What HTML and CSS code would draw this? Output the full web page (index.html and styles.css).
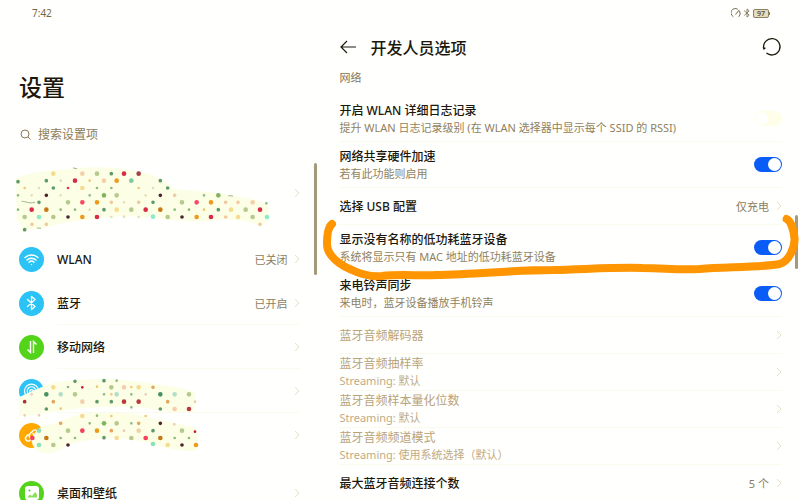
FILE: index.html
```
<!DOCTYPE html>
<html lang="zh-CN">
  <head>
    <meta charset="UTF-8" />
    <meta name="viewport" content="width=device-width, initial-scale=1.0" />
    <title>设置</title>
    <link rel="stylesheet" href="styles.css">
  </head>
  <body>
    <svg width="0" height="0" class="sprite">
      <symbol id="chevron" viewBox="0 0 6 10">
        <path d="M1 1l4 4-4 4" fill="none" stroke="currentColor" />
      </symbol>
      <symbol id="bluetooth" viewBox="0 0 12 16">
        <path d="M2 4.5l7.5 7L6 14.5V1.5l3.5 3L2 11.5" fill="none" stroke="currentColor" stroke-width="1.3" stroke-linejoin="round" stroke-linecap="round" />
      </symbol>
    </svg>

    <header class="status">
      <time>7:42</time>
      <div class="status-icons">
        <svg width="10" height="10" viewBox="0 0 10 10" fill="none" stroke="currentColor" stroke-linecap="round">
          <path d="M2 8.5A4.2 4.2 0 0 1 6.5 1.1M8.7 3.3A4.2 4.2 0 0 1 8 8.5M4.8 6.2L8 2.2" />
        </svg>
        <svg width="8" height="10"><use href="#bluetooth" /></svg>
        <span class="battery">97</span>
      </div>
    </header>

    <div class="panels">
      <aside class="sidebar">
        <h1>设置</h1>
        <label class="search">
          <svg width="11" height="11" viewBox="0 0 11 11" fill="none" stroke="currentColor">
            <circle cx="5" cy="5" r="4" />
            <path d="M8 8l2.5 2.5" />
          </svg>
          <input type="search" placeholder="搜索设置项" aria-label="搜索设置项" />
        </label>

        <nav>
          <a href="#account" class="item account" aria-label="账号">
            <svg class="chevron"><use href="#chevron" /></svg>
            <svg class="scribble scribble-account" viewBox="42 45 780 210" stroke-linecap="round">
              <path fill="#fcffe6" d="M48 88C100 64 170 66 225 58C300 50 380 60 430 70C470 80 500 96 520 120C580 126 640 128 700 140C750 148 795 158 806 170L806 208C795 222 790 232 776 228C740 212 690 206 640 214C600 224 570 214 500 212C420 198 330 200 280 210C220 214 180 222 130 238C110 242 90 238 70 248C62 240 66 224 50 214Z" />
              <g class="dots-s">
                <path stroke="#f2c877" d="M74 117h0M416 117h0M612 182h0M269 95h0" />
                <path stroke="#e5dfb8" d="M95 139h0M182 95h0M182 139h0M117 117h0M459 117h0M269 182h0M372 160h0M437 139h0M334 204h0M372 203h0M416 204h0" />
                <path stroke="#8fba7e" d="M182 182h0M225 182h0M269 139h0M291 117h0M334 117h0M524 182h0M567 182h0M612 139h0M54 139h0M54 182h0M799 163h0" />
                <path stroke="#e33150" d="M204 117h0" />
              </g>
              <g class="dots-m">
                <path stroke="#4b2430" d="M139 139h0M204 204h0M481 139h0M546 204h0" />
                <path stroke="#5e9b68" d="M54 98h0M139 95h0M160 117h0M334 74h0M481 95h0M503 117h0M312 182h0M655 182h0M74 242h0M117 160h0M459 160h0" />
                <path stroke="#f0c9a0" d="M524 139h0M334 160h0M677 160h0M714 160h0M677 204h0M416 160h0M139 226h0M96 226h0M780 226h0" />
              </g>
              <g class="dots-l">
                <path stroke="#b6c98e" d="M74 204h0M160 204h0M204 160h0M350 139h0M394 182h0M503 204h0M546 160h0M737 182h0M758 204h0M291 74h0" />
                <path stroke="#f5cfac" d="M247 74h0M312 95h0M758 160h0" />
                <path stroke="#f6dc91" d="M160 74h0M247 117h0M350 182h0M693 182h0M714 204h0" />
                <path stroke="#d92b46" d="M225 95h0M372 74h0M95 182h0M437 182h0M780 182h0M291 204h0M633 204h0" />
                <path stroke="#f54b65" d="M247 160h0M590 160h0" />
                <path stroke="#a2424b" d="M416 74h0" />
                <path stroke="#ee9a1d" d="M350 95h0M291 160h0M247 204h0M590 204h0M633 160h0" />
                <path stroke="#c77916" d="M139 182h0M481 182h0" />
                <path stroke="#82b45e" d="M312 139h0M655 139h0" />
                <path stroke="#7fc9a0" d="M394 95h0" />
                <path stroke="#8cebc8" d="M117 204h0M459 203h0M801 204h0" />
              </g>
              <path d="M66 157c14 0 18 8 38 3M220 57l10 2M686 140l12 1M112 237l10 1" fill="none" stroke="#9fb58a" stroke-width="3" />
            </svg>
          </a>

          <a href="#wlan" class="item">
            <span class="badge blue">
              <svg width="17" height="17" viewBox="0 0 17 17" fill="none" stroke="#fff" stroke-width="1.4" stroke-linecap="round">
                <path d="M2 6.5a9.5 9.5 0 0 1 13 0M4 9a6.5 6.5 0 0 1 9 0M6 11.3a3.6 3.6 0 0 1 5 0M8.5 13.5h0" />
              </svg>
            </span>
            <span class="name">WLAN</span>
            <span class="value">已关闭</span>
            <svg class="chevron"><use href="#chevron" /></svg>
          </a>
          <a href="#bluetooth-settings" class="item line">
            <span class="badge blue"><svg width="13" height="16"><use href="#bluetooth" /></svg></span>
            <span class="name">蓝牙</span>
            <span class="value">已开启</span>
            <svg class="chevron"><use href="#chevron" /></svg>
          </a>
          <a href="#mobile" class="item line">
            <span class="badge green">
              <svg width="14" height="14" viewBox="0 0 14 14" fill="none" stroke="#fff" stroke-width="1.4">
                <path d="M5.5 1v11.5L2.5 9.5M8.5 13V1.5l3 3" />
              </svg>
            </span>
            <span class="name">移动网络</span>
            <svg class="chevron"><use href="#chevron" /></svg>
          </a>
          <a href="#device" class="item line covered" aria-label="超级终端">
            <span class="badge blue">
              <svg width="17" height="17" viewBox="0 0 17 17" fill="none" stroke="#fff" stroke-width="1.2" stroke-linecap="round">
                <path d="M3.5 13a7 7 0 1 1 10 0M5.3 11a4.3 4.3 0 1 1 6.4 0" />
                <circle cx="8.5" cy="8.5" r="1.8" />
              </svg>
            </span>
            <svg class="chevron"><use href="#chevron" /></svg>
            <svg class="scribble scribble-device" viewBox="45 45 561 249" stroke-linecap="round">
              <path fill="#fcffe6" d="M58 114C85 102 120 84 160 72C230 58 330 58 400 66C470 76 550 84 584 100Q592 116 580 160C540 162 490 158 440 148C390 138 310 144 240 148C170 154 120 168 58 172Z" />
              <path fill="#fcffe6" d="M125 203C150 200 180 186 230 168C300 152 400 160 450 176C500 190 560 194 586 208Q600 240 588 276C540 278 490 264 430 248C350 230 270 236 200 260C180 276 150 286 130 282C108 276 98 262 95 248C95 232 105 216 125 203Z" />
              <g class="dots-s">
                <path stroke="#f2c877" d="M291 83h0M394 84h0M437 171h0M334 171h0M182 149h0M334 106h0" />
                <path stroke="#8fba7e" d="M204 84h0M312 106h0M394 106h0M394 193h0M350 65h0M269 193h0M182 237h0M225 237h0M524 237h0M567 237h0M291 170h0M394 145h0" />
                <path stroke="#e9cdb7" d="M74 169h0M117 169h0M372 215h0M585 128h0M523 196h0M437 106h0M95 106h0" />
                <path stroke="#c41a2e" d="M247 85h0M585 218h0" />
              </g>
              <g class="dots-m">
                <path stroke="#4b2430" d="M481 193h0M204 258h0M546 258h0" />
                <path stroke="#5e9b68" d="M139 150h0M291 128h0M334 128h0M481 150h0M312 65h0M225 67h0M312 236h0M459 215h0" />
                <path stroke="#e4a65e" d="M459 85h0M160 128h0M182 193h0M334 215h0M416 193h0M503 128h0" />
                <path stroke="#a8303b" d="M74 128h0" />
              </g>
              <g class="dots-l">
                <path stroke="#b6c98e" d="M334 85h0M225 106h0M204 215h0M350 193h0M394 237h0M546 215h0M567 106h0M160 258h0" />
                <path stroke="#f5cfac" d="M247 128h0M416 215h0M524 150h0M372 85h0" />
                <path stroke="#f6dc91" d="M247 171h0M160 85h0M416 85h0M350 237h0M503 258h0" />
                <path stroke="#b5dec9" d="M182 106h0M524 106h0M350 106h0" />
                <path stroke="#479263" d="M139 106h0M481 106h0" />
                <path stroke="#b83b40" d="M372 128h0M416 128h0M567 150h0" />
                <path stroke="#f5405e" d="M247 215h0M437 237h0M97 237h0" />
                <path stroke="#ee9a1d" d="M291 215h0M588 258h0" />
                <path stroke="#c77916" d="M139 237h0M481 237h0" />
                <path stroke="#82b45e" d="M312 193h0" />
                <path stroke="#8cdfba" d="M117 215h0M117 258h0M459 255h0" />
              </g>
            </svg>
          </a>
          <a href="#more" class="item" aria-label="更多连接">
            <span class="badge amber">
              <svg width="17" height="17" viewBox="0 0 17 17" fill="none" stroke="#fff" stroke-width="1.4" stroke-linecap="round">
                <path d="M7 10.5a2.6 2.6 0 0 1 0-3.7l3-3a2.6 2.6 0 0 1 3.7 3.7L12 9.2M10 6.5a2.6 2.6 0 0 1 0 3.7l-3 3a2.6 2.6 0 0 1-3.7-3.7L5 7.8" />
              </svg>
            </span>
            <svg class="chevron"><use href="#chevron" /></svg>
          </a>
          <a href="#wallpaper" class="item group">
            <span class="badge green">
              <svg width="14" height="14" viewBox="0 0 14 14">
                <rect width="14" height="14" rx="3" fill="#fff" />
                <circle cx="4.5" cy="4.5" r="1" fill="#56cf1d" />
                <path d="M2 11.5l3-3 2 1.5 3-4 2 2.5v3z" fill="#8be05c" />
              </svg>
            </span>
            <span class="name">桌面和壁纸</span>
            <svg class="chevron"><use href="#chevron" /></svg>
          </a>
        </nav>
        <span class="thumb"></span>
      </aside>

      <main class="detail">
        <div class="title-bar">
          <button type="button" aria-label="返回">
            <svg width="17" height="16" viewBox="0 0 17 16" fill="none" stroke="currentColor" stroke-width="1.2">
              <path d="M8 2L2 8l6 6M2 8h15" />
            </svg>
          </button>
          <h2>开发人员选项</h2>
          <button type="button" aria-label="重置">
            <svg width="20" height="20" viewBox="0 0 20 20" fill="none" stroke="currentColor" stroke-width="1.3">
              <path d="M4.5 16A8.2 8.2 0 1 0 1.8 11.5" />
              <path d="M1.2 10.3l.8 1.7 1.4-1.2" />
            </svg>
          </button>
        </div>

        <h3>网络</h3>
        <label class="row tall">
          <span class="text"><b>开启 WLAN 详细日志记录</b><small>提升 WLAN 日志记录级别 (在 WLAN 选择器中显示每个 SSID 的 RSSI)</small></span>
          <input type="checkbox" class="switch" />
        </label>
        <label class="row tall">
          <span class="text"><b>网络共享硬件加速</b><small>若有此功能则启用</small></span>
          <input type="checkbox" class="switch" checked />
        </label>
        <a href="#usb" class="row">
          <span class="text"><b>选择 USB 配置</b></span>
          <span class="value">仅充电</span>
          <svg class="chevron"><use href="#chevron" /></svg>
        </a>
        <label class="row tall marked">
          <span class="text"><b>显示没有名称的低功耗蓝牙设备</b><small>系统将显示只有 MAC 地址的低功耗蓝牙设备</small></span>
          <input type="checkbox" class="switch" checked />
          <svg class="marker" viewBox="322 212 479 68" preserveAspectRatio="none">
            <path d="M332 223C328 226 327 236 327 243C327 255 340 264 352 269C362 274 370 276 382 275C400 273 420 275 437 274C480 273 515 269 553 269C590 268 620 266 643 267C665 267 675 269 700 268C730 266 765 266 780 263C790 260 795 246 795 238C794 228 791 220 787 218" />
          </svg>
        </label>
        <label class="row tall">
          <span class="text"><b>来电铃声同步</b><small>来电时，蓝牙设备播放手机铃声</small></span>
          <input type="checkbox" class="switch" checked />
        </label>
        <a href="#codec" class="row disabled">
          <span class="text"><b>蓝牙音频解码器</b></span>
          <svg class="chevron"><use href="#chevron" /></svg>
        </a>
        <a href="#sample-rate" class="row disabled">
          <span class="text"><b>蓝牙音频抽样率</b><small>Streaming: 默认</small></span>
          <svg class="chevron"><use href="#chevron" /></svg>
        </a>
        <a href="#bits" class="row disabled">
          <span class="text"><b>蓝牙音频样本量化位数</b><small>Streaming: 默认</small></span>
          <svg class="chevron"><use href="#chevron" /></svg>
        </a>
        <a href="#channel" class="row disabled">
          <span class="text"><b>蓝牙音频频道模式</b><small>Streaming: 使用系统选择（默认）</small></span>
          <svg class="chevron"><use href="#chevron" /></svg>
        </a>
        <a href="#max" class="row">
          <span class="text"><b>最大蓝牙音频连接个数</b></span>
          <span class="value">5 个</span>
          <svg class="chevron"><use href="#chevron" /></svg>
        </a>
        <span class="thumb"></span>
      </main>
    </div>
  </body>
</html>
```
FILE: styles.css
```
* {
  box-sizing: border-box;
}
body {
  display: flex;
  flex-direction: column;
  height: 100vh;
  margin: 0;
  overflow: hidden;
  background-color: #fffffd;
  color: #1c180c;
  font-family: "Noto Sans", "Noto Sans CJK SC", sans-serif;
  font-size: 12px;
}
a {
  color: inherit;
  text-decoration: none;
}
h1, h2, h3 {
  margin: 0;
  font-weight: 500;
}
button {
  display: flex;
  padding: 0;
  border: 0;
  background: none;
  color: inherit;
}
.sprite {
  position: absolute;
}

/* status bar */
.status {
  display: flex;
  flex: none;
  justify-content: space-between;
  align-items: center;
  height: 26px;
  padding: 0 32px;
  color: #75694a;
  font-size: 10px;
}
.status-icons {
  display: flex;
  align-items: center;
  gap: 2px;
}
.battery {
  position: relative;
  width: 16px;
  height: 9px;
  border: 1px solid #8d8060;
  border-radius: 2px;
  background-color: #e6dcc0;
  color: #5c5030;
  font-size: 7px;
  font-weight: 600;
  line-height: 7px;
  text-align: center;
}
.battery::after {
  content: "";
  position: absolute;
  top: 2px;
  right: -2px;
  width: 1px;
  height: 3px;
  background-color: #8d8060;
}

.panels {
  display: grid;
  flex: 1;
  grid-template-columns: 2fr 3fr;
  min-height: 0;
}
.sidebar,
.detail {
  position: relative;
  min-width: 0;
}
.thumb {
  position: absolute;
  width: 3px;
  border-radius: 2px;
  background-color: #a39a7c;
}
.chevron {
  flex: none;
  width: 6px;
  height: 10px;
  color: #e6e1c6;
}
.value {
  margin-right: 7px;
  color: #8b7d60;
  font-size: 11px;
}

/* left panel */
.sidebar {
  padding: 43px 20px 0 19px;
}
.sidebar h1 {
  margin-bottom: 14px;
  font-size: 23px;
  line-height: 36px;
}
.search {
  display: flex;
  align-items: center;
  gap: 7px;
  height: 30px;
  padding-left: 1px;
  color: #8d7c58;
}
.search input {
  flex: 1;
  min-width: 0;
  padding: 0;
  border: 0;
  outline: 0;
  background: none;
  font: inherit;
}
.search input::placeholder {
  color: #8d7c58;
}
.item {
  position: relative;
  display: flex;
  align-items: center;
  height: 44px;
}
.item .chevron {
  margin-left: auto;
}
.item .value {
  margin-left: auto;
}
.item .value + .chevron {
  margin-left: 0;
}
.account {
  height: 88px;
}
.line::after {
  content: "";
  position: absolute;
  right: 0;
  bottom: 0;
  left: 38px;
  height: 1px;
  background-color: #fafaee;
}
.group {
  margin-top: 14px;
}
.badge {
  display: flex;
  flex: none;
  justify-content: center;
  align-items: center;
  width: 25px;
  height: 25px;
  margin-right: 13px;
  border-radius: 50%;
  color: #fff;
}
.blue {
  background-color: #2bc3f5;
}
.green {
  background-color: #53d319;
}
.amber {
  background-color: #ffa800;
}
.name {
  font-weight: 500;
}
.covered {
  z-index: 1;
}
.scribble {
  position: absolute;
}
.scribble-account {
  top: 15px;
  left: -5px;
  width: 260px;
  height: 70px;
}
.scribble-device {
  top: 5px;
  left: -4px;
  width: 187px;
  height: 83px;
}
.dots-s {
  stroke-width: 8;
}
.dots-m {
  stroke-width: 11;
}
.dots-l {
  stroke-width: 14;
}
.sidebar .thumb {
  top: 137px;
  right: 3px;
  height: 112px;
}

/* right panel */
.detail {
  padding: 0 19px;
}
.title-bar {
  display: flex;
  align-items: center;
  gap: 14px;
  height: 41px;
}
.title-bar h2 {
  flex: 1;
  font-size: 16px;
}
.detail h3 {
  margin-bottom: 8px;
  padding-top: 1px;
  color: #857552;
  font-size: 11px;
  font-weight: 400;
  line-height: 20px;
}
.row {
  position: relative;
  display: flex;
  align-items: center;
  height: 37px;
  border-bottom: 1px solid #fafaee;
}
.tall {
  height: 46px;
}
.text {
  display: flex;
  flex: 1;
  flex-direction: column;
  min-width: 0;
}
.text b {
  font-weight: 500;
  line-height: 17px;
}
.text small {
  color: #8f7f5f;
  font-size: 11px;
  line-height: 17px;
  white-space: nowrap;
}
.disabled b {
  color: #b9a37a;
  font-weight: 400;
}
.disabled small {
  color: #bfab84;
}
.switch {
  position: relative;
  flex: none;
  width: 28px;
  height: 15px;
  margin: 0;
  border-radius: 8px;
  background-color: #ffffe9;
  appearance: none;
}
.switch::before {
  content: "";
  position: absolute;
  top: 1px;
  left: 1px;
  width: 13px;
  height: 13px;
  border-radius: 50%;
  background-color: #fffffd;
}
.switch:checked {
  background-color: #0a5cf7;
}
.switch:checked::before {
  left: 14px;
}
.marked {
  z-index: 1;
}
.marker {
  position: absolute;
  top: -12px;
  left: -17px;
  width: calc(100% + 36px);
  height: 68px;
  fill: none;
  stroke: #ff9500;
  stroke-width: 8;
  stroke-linecap: round;
  pointer-events: none;
}
.detail .thumb {
  top: 189px;
  right: 3px;
  height: 54px;
}
```
